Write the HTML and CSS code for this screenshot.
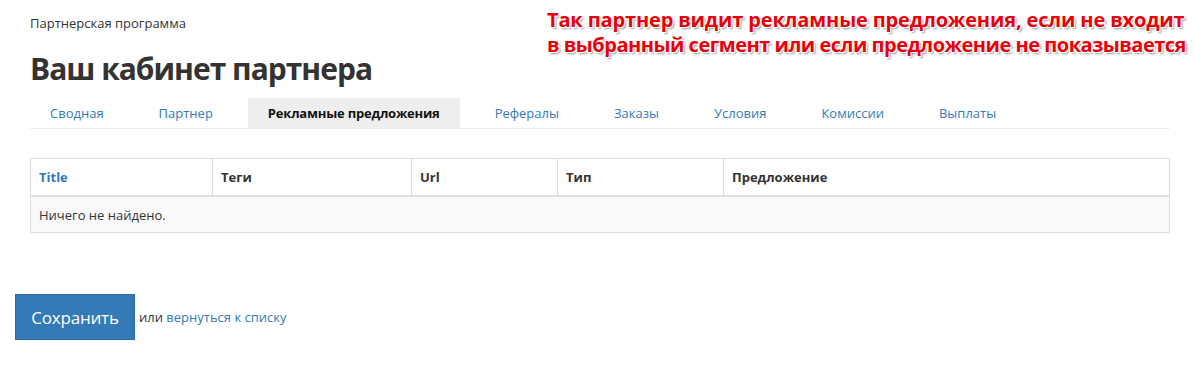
FILE: index.html
```html
<!DOCTYPE html>
<html lang="ru">
<head>
    <meta charset="UTF-8">
    <title>Ваш кабинет партнера</title>
    <link rel="stylesheet" href="styles.css">
</head>
<body>
    <div class="page">
        <div class="content">
            <div class="top">
                <div class="head">
                    <div class="breadcrumb">Партнерская программа</div>
                    <h1>Ваш кабинет партнера</h1>
                </div>
                <div class="note">
                    <span class="note-line">Так партнер видит рекламные предложения, если не входит</span>
                    <span class="note-line note-tight">в выбранный сегмент или если предложение не показывается</span>
                </div>
            </div>

            <ul class="tabs">
                <li><a href="#">Сводная</a></li>
                <li><a href="#">Партнер</a></li>
                <li class="active"><a href="#">Рекламные предложения</a></li>
                <li><a href="#">Рефералы</a></li>
                <li><a href="#">Заказы</a></li>
                <li><a href="#">Условия</a></li>
                <li><a href="#">Комиссии</a></li>
                <li><a href="#">Выплаты</a></li>
            </ul>

            <table class="grid">
                <thead>
                    <tr>
                        <th class="col-title"><a href="#">Title</a></th>
                        <th class="col-tags">Теги</th>
                        <th class="col-url">Url</th>
                        <th class="col-type">Тип</th>
                        <th>Предложение</th>
                    </tr>
                </thead>
                <tbody>
                    <tr>
                        <td colspan="5">Ничего не найдено.</td>
                    </tr>
                </tbody>
            </table>
        </div>

        <div class="actions">
            <button class="btn-save">Сохранить</button>
            <span class="or">или <a href="#">вернуться к списку</a></span>
        </div>
    </div>
</body>
</html>
```

FILE: styles.css
```css
body {
    margin: 0;
    font-family: 'Open Sans', 'Liberation Sans', sans-serif;
    font-size: 13px;
    color: #333;
    background: #fff;
}

a {
    color: #337ab7;
    text-decoration: none;
}

.page {
    padding: 0 15px;
}

.content {
    padding: 0 15px;
    width: 1140px;
}

.top {
    display: flex;
    justify-content: space-between;
}

.breadcrumb {
    padding-top: 14px;
    font-size: 13px;
    color: #333;
}

h1 {
    margin: 18px 0 0;
    font-size: 30px;
    font-weight: 700;
    line-height: 38px;
    color: #333;
    letter-spacing: -1px;
}

/* annotation over the screenshot */
.note {
    width: 645px;
    margin-top: 7px;
    margin-right: -22px;
    white-space: nowrap;
    font-family: 'Open Sans', sans-serif;
    font-size: 20px;
    font-weight: 700;
    line-height: 25px;
    letter-spacing: -0.15px;
    color: #e8000b;
    text-shadow: 1px 1px 0 #fff, -1px -1px 0 #fff, 1px -1px 0 #fff, -1px 1px 0 #fff, 2px 2px 2px #999;
}

.note-line {
    display: block;
}

.note-tight {
    letter-spacing: -0.5px;
}

.tabs {
    display: flex;
    gap: 15px;
    list-style: none;
    margin: 10px 0 0;
    padding: 0;
    border-bottom: 1px solid #eee;
}

.tabs li a {
    display: block;
    padding: 0 20px;
    line-height: 30px;
    font-size: 13px;
    color: #337ab7;
}

.tabs li.active a {
    background: #eee;
    color: #111;
    font-weight: 700;
    letter-spacing: -0.2px;
}

.grid {
    width: 100%;
    margin-top: 29px;
    border-collapse: collapse;
    border: 1px solid #ddd;
}

.grid th,
.grid td {
    padding: 0 8px;
    text-align: left;
    font-size: 13px;
    border: 1px solid #ddd;
}

.grid th {
    height: 36px;
    font-weight: 700;
    color: #333;
    border-bottom-width: 2px;
}

.grid td {
    height: 35px;
    background: #f9f9f9;
}

.col-title { width: 165px; }
.col-tags { width: 182px; }
.col-url { width: 129px; }
.col-type { width: 149px; }

.actions {
    display: flex;
    align-items: center;
    margin-top: 61px;
}

.btn-save {
    width: 120px;
    height: 46px;
    background: #337ab7;
    border: 1px solid #2e6da4;
    color: #fff;
    font-family: inherit;
    font-size: 17px;
    letter-spacing: -0.2px;
    padding: 0;
    cursor: pointer;
}

.or {
    margin-left: 4px;
    font-size: 13px;
}
```
